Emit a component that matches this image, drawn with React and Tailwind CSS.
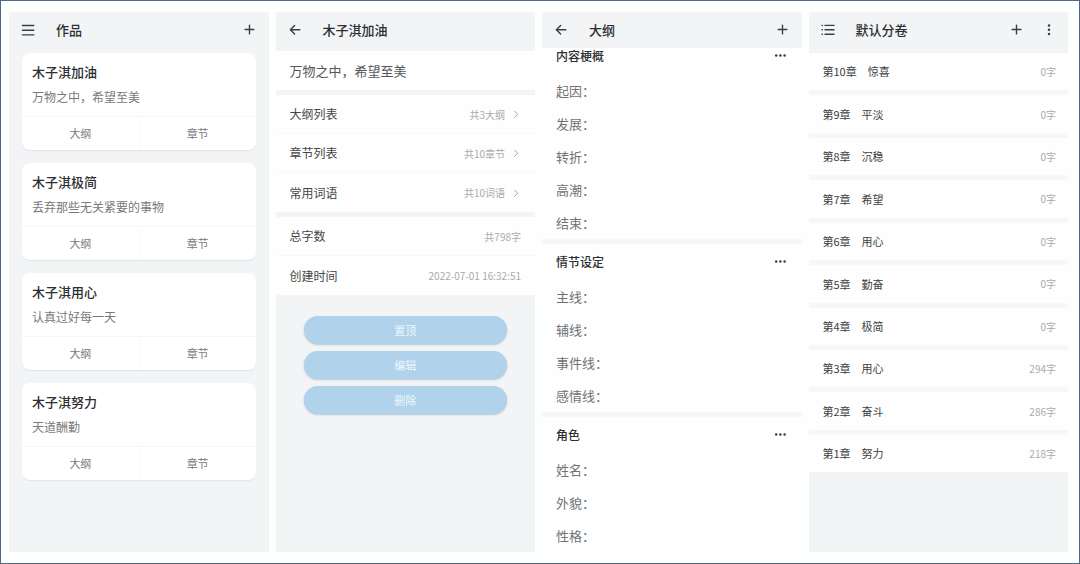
import React from "react";

const works = [
  { title: "木子淇加油", summary: "万物之中，希望至美" },
  { title: "木子淇极简", summary: "丢弃那些无关紧要的事物" },
  { title: "木子淇用心", summary: "认真过好每一天" },
  { title: "木子淇努力", summary: "天道酬勤" },
];

const links = [
  { label: "大纲列表", value: "共3大纲" },
  { label: "章节列表", value: "共10章节" },
  { label: "常用词语", value: "共10词语" },
];

const stats = [
  { label: "总字数", value: "共798字" },
  { label: "创建时间", value: "2022-07-01 16:32:51" },
];

const outline = [
  { title: "内容梗概", fields: ["起因", "发展", "转折", "高潮", "结束"] },
  { title: "情节设定", fields: ["主线", "辅线", "事件线", "感情线"] },
  { title: "角色", fields: ["姓名", "外貌", "性格"] },
];

const chapters = [
  { no: 10, name: "惊喜", words: 0 },
  { no: 9, name: "平淡", words: 0 },
  { no: 8, name: "沉稳", words: 0 },
  { no: 7, name: "希望", words: 0 },
  { no: 6, name: "用心", words: 0 },
  { no: 5, name: "勤奋", words: 0 },
  { no: 4, name: "极简", words: 0 },
  { no: 3, name: "用心", words: 294 },
  { no: 2, name: "奋斗", words: 286 },
  { no: 1, name: "努力", words: 218 },
];

function Icon({ children, size = 14 }) {
  return (
    <svg width={size} height={size} viewBox="0 0 14 14" fill="none" stroke="currentColor" strokeWidth="1.4" strokeLinecap="round" aria-hidden="true">
      {children}
    </svg>
  );
}

function MenuIcon() {
  return <Icon><path d="M1.4 2.5h11.4M1.4 7.2h11.4M1.4 11.9h11.4" /></Icon>;
}

function BackIcon() {
  return <Icon><path d="M11.8 6.7H2.4M6.6 2.5L2.4 6.7l4.2 4.2" /></Icon>;
}

function PlusIcon() {
  return <Icon><path d="M6.5 2.1v8.8M2.1 6.5h8.8" /></Icon>;
}

function ListIcon() {
  return <Icon><path d="M4 2.4h9M4 6.8h9M4 11.2h9M1 2.4h.4M1 6.8h.4M1 11.2h.4" /></Icon>;
}

function DotsIcon({ vertical }) {
  return (
    <Icon>
      <g fill="currentColor" stroke="none">
        <circle cx={vertical ? 7 : 2.2} cy={vertical ? 2.6 : 6.5} r="1.25" />
        <circle cx={vertical ? 7 : 6.4} cy={vertical ? 6.8 : 6.5} r="1.25" />
        <circle cx={vertical ? 7 : 10.6} cy={vertical ? 11 : 6.5} r="1.25" />
      </g>
    </Icon>
  );
}

function IconButton({ label, children }) {
  return <button type="button" aria-label={label} className="flex text-[#3c3e40]">{children}</button>;
}

function Header({ title, left, children }) {
  return (
    <header className="flex h-9 shrink-0 items-center px-3">
      {left}
      <h2 className="ml-[21px] flex-1 text-[13px] leading-5 font-medium">{title}</h2>
      <div className="flex gap-[18px]">{children}</div>
    </header>
  );
}

function Panel({ children }) {
  return <section className="flex min-w-0 flex-col overflow-hidden bg-[#f2f4f6]">{children}</section>;
}

function WorksPanel() {
  return (
    <Panel>
      <Header title="作品" left={<IconButton label="菜单"><MenuIcon /></IconButton>}>
        <IconButton label="新建作品"><PlusIcon /></IconButton>
      </Header>
      <div className="flex flex-col gap-[13px] px-[13px] pt-[5px]">
        {works.map((work) => (
          <article key={work.title} className="rounded-lg bg-white shadow-[0_1px_1px_#e2e5e8]">
            <div className="px-[10px] py-[9px]">
              <h3 className="text-[13px] leading-5 font-medium">{work.title}</h3>
              <p className="mt-[5px] text-xs leading-5 text-[#77797b]">{work.summary}</p>
            </div>
            <div className="grid h-[34px] grid-cols-2 border-t border-[#f6f7f8] text-[11px] text-[#77797b]">
              <button type="button">大纲</button>
              <button type="button" className="border-l border-[#fafbfb]">章节</button>
            </div>
          </article>
        ))}
      </div>
    </Panel>
  );
}

function DetailPanel() {
  return (
    <Panel>
      <Header title="木子淇加油" left={<IconButton label="返回"><BackIcon /></IconButton>} />
      <div className="flex flex-col gap-[5px] pt-[3px]">
        <p className="bg-[#fefefe] px-[14px] text-[13px] leading-[39px] text-[#555759]">万物之中，希望至美</p>
        <div className="divide-y divide-[#f8f8f9] bg-[#fefefe]">
          {links.map((item) => (
            <a key={item.label} href="#" className="flex h-[39px] items-center px-[14px]">
              <span className="flex-1 text-xs text-[#444648]">{item.label}</span>
              <span className="text-[10px] text-[#a9abad]">{item.value}</span>
              <span className="ml-1.5 text-[#a0a2a4]">
                <Icon size={10}><path d="M5 3l4.4 4.4L5 11.8" /></Icon>
              </span>
            </a>
          ))}
        </div>
        <dl className="divide-y divide-[#f8f8f9] bg-[#fefefe]">
          {stats.map((item) => (
            <div key={item.label} className="flex h-[39px] items-center justify-between px-[14px]">
              <dt className="text-xs text-[#444648]">{item.label}</dt>
              <dd className="text-[10px] text-[#a9abad]">{item.value}</dd>
            </div>
          ))}
        </dl>
      </div>
      <div className="mt-[21px] flex flex-col gap-[7px] px-7 text-[11px] text-[#edf8fe]">
        {["置顶", "编辑", "删除"].map((label) => (
          <button key={label} type="button" className="h-7 rounded-full bg-[#b0d2ea] shadow-[0_1px_2px_#b9c6d2]">{label}</button>
        ))}
      </div>
    </Panel>
  );
}

function OutlinePanel() {
  return (
    <Panel>
      <Header title="大纲" left={<IconButton label="返回"><BackIcon /></IconButton>}>
        <IconButton label="新建大纲"><PlusIcon /></IconButton>
      </Header>
      <div className="min-h-0 flex-1 overflow-hidden bg-[#fefefe]">
        {/* list is scrolled slightly under the header */}
        <div className="-mt-[10px] flex flex-col gap-[5px] bg-[#f7f7f8]">
          {outline.map((group) => (
            <div key={group.title} className="bg-[#fefefe] px-[14px]">
              <div className="flex h-9 items-center justify-between">
                <h3 className="text-xs font-medium">{group.title}</h3>
                <IconButton label="更多"><DotsIcon /></IconButton>
              </div>
              {group.fields.map((field) => (
                <p key={field} className="text-[13px] leading-[33px] text-[#707274]">{field}：</p>
              ))}
            </div>
          ))}
        </div>
      </div>
    </Panel>
  );
}

function ChaptersPanel() {
  return (
    <Panel>
      <Header title="默认分卷" left={<IconButton label="目录"><ListIcon /></IconButton>}>
        <IconButton label="新建章节"><PlusIcon /></IconButton>
        <IconButton label="更多"><DotsIcon vertical /></IconButton>
      </Header>
      <ul className="mt-[5px] flex min-h-0 flex-[84] flex-col gap-[5px] bg-[#f6f7f8]">
        {chapters.map((chapter) => (
          <li key={chapter.no} className="flex flex-1 items-center justify-between bg-[#fefefe] pr-3 pl-[14px]">
            <span className="text-[11px] text-[#3c3e40]">第{chapter.no}章　{chapter.name}</span>
            <span className="text-[10px] text-[#a9abad]">{chapter.words}字</span>
          </li>
        ))}
      </ul>
      <div className="flex-[16]" />
    </Panel>
  );
}

export default function App() {
  return (
    <main className="grid h-screen grid-cols-4 gap-[7px] border border-[#4f6884] bg-[#fdfefe] py-[11px] pr-[11px] pl-2 font-['Noto_Sans_CJK_SC',sans-serif] text-[#2c2e30]">
      <WorksPanel />
      <DetailPanel />
      <OutlinePanel />
      <ChaptersPanel />
    </main>
  );
}
